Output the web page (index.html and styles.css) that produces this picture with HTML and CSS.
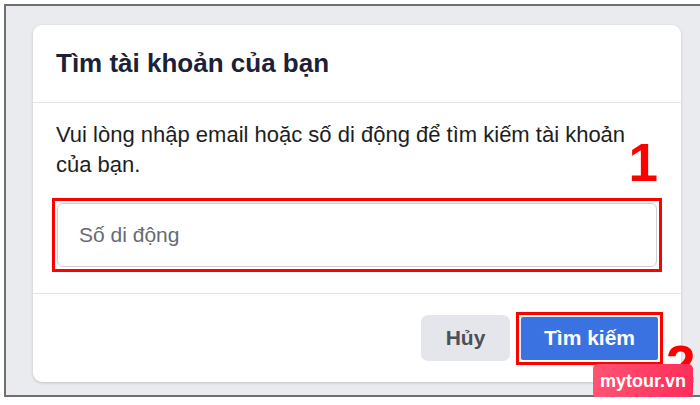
FILE: index.html
```html
<!doctype html>
<html lang="vi">
<head>
	<meta charset="UTF-8" />
	<title>Tìm tài khoản của bạn</title>
	<link rel="stylesheet" href="styles.css">
</head>
<body>

<div class="frame">
	<div class="card">
		<div class="card-head">
			<h2>Tìm tài khoản của bạn</h2>
		</div>
		<div class="card-body">
			<p>Vui lòng nhập email hoặc số di động để tìm kiếm tài khoản của bạn.</p>
			<div class="mark mark-field">
				<div class="field">
					<input type="text" placeholder="Số di động" />
				</div>
			</div>
			<span class="step step-1">1</span>
		</div>
		<div class="card-foot">
			<button class="btn btn-gray">Hủy</button>
			<span class="mark">
				<button class="btn btn-blue">Tìm kiếm</button>
			</span>
		</div>
	</div>
	<span class="step step-2">2</span>
	<div class="badge">mytour.vn</div>
</div>

</body>
</html>
```

FILE: styles.css
```css
body{
	margin: 0;
	padding: 0;
	background: #fff;
	font-family: "Liberation Sans", Arial, sans-serif;
}
.frame{
	position: relative;
	margin: 4px 0 0 4px;
	height: 393px;
	border-top: 2px solid #6f6f6f;
	border-left: 2px solid #6f6f6f;
	border-bottom: 2px solid #6f6f6f;
	background: #e9ebee;
	padding: 19px 0 0 27px;
	box-sizing: border-box;
}
.card{
	position: relative;
	width: 648px;
	height: 357px;
	background: #fff;
	border-radius: 9px;
	box-shadow: 0 1px 3px rgba(0, 0, 0, 0.18);
	display: flex;
	flex-direction: column;
}
.card-head{
	height: 78px;
	padding: 0 23px;
	display: flex;
	align-items: center;
	border-bottom: 1px solid #e2e4e7;
	box-sizing: border-box;
}
.card-head h2{
	margin: 0;
	font-size: 26px;
	font-weight: bold;
	color: #1b2136;
}
.card-body{
	position: relative;
	height: 191px;
	padding: 17px 23px 0 23px;
	border-bottom: 1px solid #e2e4e7;
	box-sizing: border-box;
}
.card-body p{
	margin: 0 30px 18px 0;
	font-size: 22px;
	line-height: 30px;
	color: #1c1e21;
}
.mark{
	display: inline-flex;
	padding: 2px;
	border: 3px solid #f00;
}
.mark-field{
	display: flex;
	margin: 0 -4px 0 -4px;
}
.field{
	flex: 1;
	height: 64px;
	border: 1px solid #ccd0d5;
	border-radius: 6px;
	display: flex;
	box-sizing: border-box;
}
.field input{
	flex: 1;
	border: 0;
	background: transparent;
	padding: 0 21px;
	font-family: "Liberation Sans", Arial, sans-serif;
	font-size: 21px;
	outline: none;
}
.field input::placeholder{
	color: #666b73;
}
.card-foot{
	flex: 1;
	display: flex;
	align-items: center;
	justify-content: flex-end;
	gap: 6px;
	padding: 0 18px 0 23px;
}
.btn{
	border: 0;
	border-radius: 7px;
	font-family: "Liberation Sans", Arial, sans-serif;
	font-size: 21px;
	font-weight: bold;
	cursor: pointer;
}
.btn-gray{
	width: 89px;
	height: 46px;
	background: #e4e6eb;
	color: #4b4f56;
}
.btn-blue{
	width: 137px;
	height: 43px;
	border-radius: 2px;
	background: #3b72e2;
	color: #fff;
}
.step{
	position: absolute;
	font-size: 53px;
	font-weight: bold;
	line-height: 1;
	color: #f00;
}
.step-1{
	right: 23px;
	top: 33px;
}
.step-2{
	left: 660px;
	top: 332px;
}
.badge{
	position: absolute;
	left: 587px;
	top: 358px;
	width: 100px;
	height: 34px;
	border-radius: 5px;
	background: linear-gradient(90deg, #ff5470, #ff2d5c);
	color: #fff;
	font-size: 18px;
	font-weight: bold;
	line-height: 34px;
	text-align: center;
}
```
